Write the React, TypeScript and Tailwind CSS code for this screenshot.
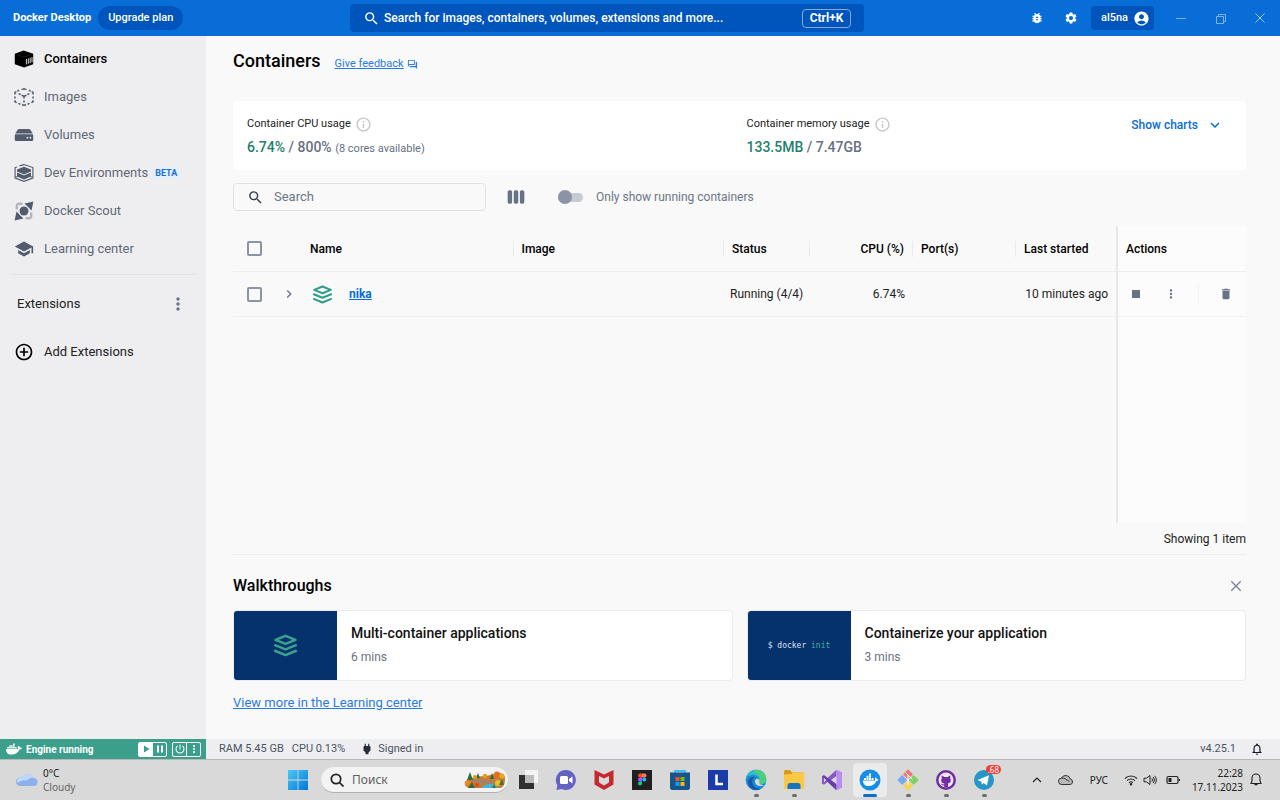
import React from "react";
import {
  MdAccountCircle,
  MdAddCircleOutline,
  MdBugReport,
  MdChevronRight,
  MdClose,
  MdDelete,
  MdInfoOutline,
  MdKeyboardArrowDown,
  MdMoreVert,
  MdNotificationsNone,
  MdOutlineForum,
  MdPause,
  MdPlayArrow,
  MdPower,
  MdPowerSettingsNew,
  MdSchool,
  MdSearch,
  MdSettings,
  MdStop,
  MdViewWeek,
} from "react-icons/md";
import { FaDocker } from "react-icons/fa";

type IconProps = { className?: string };

function ContainersIcon({ className }: IconProps) {
  return (
    <svg viewBox="0 0 20 18" className={className} fill="currentColor" aria-hidden="true">
      <path d="M9.6.6 19.2 3.8v10.400L10 17.600.8 14.200V3.800z" />
      <path d="m1 3.900 8.800 3.200 9-3.200" stroke="#5a5a5e" strokeWidth="0.300" fill="none" />
      <path d="M12.400 9v5.400M14.300 8.400v5.400M16.200 7.700v5.400M18 7.100v5.300" stroke="#eeeef1" strokeWidth="0.900" fill="none" />
    </svg>
  );
}

function ImagesIcon({ className }: IconProps) {
  return (
    <svg viewBox="0 0 20 18" className={className} fill="none" stroke="currentColor" strokeWidth="1.5" aria-hidden="true">
      <path d="M7.6 1.6 10 .9l2.4.7M3.2 3.1l2-.8M14.8 2.3l2 .8M1 6.6V4.4l1.4-.7M19 6.6V4.4l-1.4-.7M1 8.4v2M19 8.4v2M1 12.2v1.6l1.6.9M19 12.2v1.6l-1.6.9M4.4 15.4l2 .8M15.6 15.4l-2 .8M8 16.7l2 .6 2-.6" />
      <path d="m4.6 5.6 2 .9M15.4 5.6l-2 .9M7.6 7.3l2.4 1 2.4-1M10 8.4v2.2M10 12.4v2" />
    </svg>
  );
}

function VolumesIcon({ className }: IconProps) {
  return (
    <svg viewBox="0 0 20 18" className={className} fill="currentColor" aria-hidden="true">
      <path d="M5 3h10a1.500 1.500 0 0 1 1.200.6L18.800 7.400H1.200l2.600-3.800A1.500 1.500 0 0 1 5 3z" />
      <path d="M2 8.200h16a1.200 1.200 0 0 1 1.200 1.200v4.400A1.200 1.200 0 0 1 18 15H2a1.200 1.200 0 0 1-1.200-1.200V9.400A1.200 1.200 0 0 1 2 8.200z" />
      <circle cx="13.4" cy="11.700" r="0.900" fill="#eeeef1" />
      <circle cx="16.400" cy="11.700" r="0.900" fill="#eeeef1" />
    </svg>
  );
}

function DevIcon({ className }: IconProps) {
  return (
    <svg viewBox="0 0 20 18" className={className} fill="none" stroke="currentColor" aria-hidden="true">
      <path d="M5.500 1.900 10 .6l8.900 3v10.400L10 17.300 1.100 14V3.600L3 2.900" strokeWidth="1.100" />
      <path d="M3 5.600 10 2.800l7 2.800v7L10 15.600 3 12.600z" fill="currentColor" stroke="none" />
      <path d="m3 8 7 2.900L17 8" stroke="#eeeef1" strokeWidth="1" />
      <path d="m1.100 12.200 2.400 1M18.900 12.200l-2.400 1" strokeWidth="1" />
    </svg>
  );
}

function ScoutIcon({ className }: IconProps) {
  return (
    <svg viewBox="0 0 20 20" className={className} fill="none" aria-hidden="true">
      <path d="M10.500 2.500 19.400.6l-1.900 8.900zM9.500 17.500.6 19.400l1.900-8.900z" fill="#505b6b" />
      <path d="M2.800 8.500V5a2.200 2.200 0 0 1 2.200-2.200h3.500M17.200 11.500V15a2.200 2.200 0 0 1-2.200 2.200h-3.500" stroke="#b0b5be" strokeWidth="2.400" />
      <circle cx="10" cy="10" r="5.600" fill="#eeeef1" />
      <circle cx="10" cy="10" r="4.500" fill="#505b6b" />
    </svg>
  );
}

function StackIcon({ className }: IconProps) {
  return (
    <svg viewBox="0 0 24 22" className={className} fill="none" stroke="currentColor" strokeWidth="2.400" strokeLinejoin="round" aria-hidden="true">
      <path d="M12 1.700 21.600 5.600 12 9.500 2.400 5.600z" />
      <path d="m1.200 10.400 10.800 4.400 10.800-4.400M1.200 15.800 12 20.200l10.800-4.400" />
    </svg>
  );
}

const navItems = [
  { label: "Containers", Icon: ContainersIcon, active: true },
  { label: "Images", Icon: ImagesIcon },
  { label: "Volumes", Icon: VolumesIcon },
  { label: "Dev Environments", Icon: DevIcon, badge: "BETA" },
  { label: "Docker Scout", Icon: ScoutIcon },
  { label: "Learning center", Icon: MdSchool },
];

function TitleBar() {
  return (
    <header className="flex h-9 items-center bg-[#086dd7] text-white">
      <div className="flex flex-350 items-center">
        <span className="ml-[13px] text-[11px] font-bold">Docker Desktop</span>
        <button className="ml-[7px] h-6 rounded-full bg-[#0055bc] px-[10px] text-[11px] font-medium">Upgrade plan</button>
      </div>
      <button className="flex h-7 w-[514px] items-center rounded bg-[#0055bc] px-[13px] text-xs font-medium">
        <MdSearch className="mr-1 size-[17px]" />
        <span className="flex-1 text-left">Search for images, containers, volumes, extensions and more...</span>
        <kbd className="flex h-[19px] w-[49px] items-center justify-center rounded border border-[#7faade] font-['Roboto',sans-serif] text-xs font-bold">
          Ctrl+K
        </kbd>
      </button>
      <div className="flex flex-416 items-center justify-end">
        <button aria-label="Troubleshoot" className="mr-5"><MdBugReport className="size-[14px]" /></button>
        <button aria-label="Settings" className="mr-[13px]"><MdSettings className="size-[14px]" /></button>
        <button className="flex h-6 items-center gap-1 rounded bg-[#0055bc] pr-1 pl-[10px] text-[11px] font-medium">
          al5na
          <MdAccountCircle className="ml-px size-[17px]" />
        </button>
        <button aria-label="Minimize" className="flex h-9 w-10 items-center justify-center pl-[14px]">
          <svg viewBox="0 0 10 10" className="size-[10px]" stroke="#7fb0ea"><path d="M0 5.500h10" /></svg>
        </button>
        <button aria-label="Restore" className="flex h-9 w-10 items-center justify-center">
          <svg viewBox="0 0 12 12" className="mt-px ml-[14px] size-3" fill="none" stroke="#7fb0ea"><path d="M1.500 3.500h7v7h-7zM3.500 3.500v-2h7v7h-2" /></svg>
        </button>
        <button aria-label="Close" className="flex h-9 w-[46px] items-center justify-center pl-[6px]">
          <svg viewBox="0 0 10 10" className="size-[10px]" stroke="#a5c8f2"><path d="M.5.5l9 9M9.500.5l-9 9" /></svg>
        </button>
      </div>
    </header>
  );
}

function Sidebar() {
  return (
    <aside className="flex w-[206px] shrink-0 flex-col bg-[#eeeef1] pt-1">
      <nav>
        {navItems.map(({ label, Icon, active, badge }) => (
          <a
            key={label}
            href="#"
            className={
              active
                ? "flex h-[38px] items-center pl-[14px] text-[13px] font-medium text-black"
                : "flex h-[38px] items-center pl-[14px] text-[13px] text-[#5f6875]"
            }
          >
            <Icon className={active ? "mr-[10px] size-5 text-black" : "mr-[10px] size-5 text-[#505b6b]"} />
            {label}
            {badge && (
              <span className="ml-1 rounded-sm bg-[#e3f0fb] px-[3px] text-[9px] leading-3 font-bold text-[#1a6fd4]">
                {badge}
              </span>
            )}
          </a>
        ))}
      </nav>
      <hr className="mx-[10px] mt-[6px] border-[#e4e4e8]" />
      <div className="mt-[19px] flex items-center justify-between pr-[18px] pl-[17px] text-[13px] text-[#222]">
        Extensions
        <button aria-label="Extension options" className="text-[#677285]"><MdMoreVert className="size-5" /></button>
      </div>
      <a href="#" className="mt-7 flex items-center pl-[14px] text-[13px] text-[#222]">
        <MdAddCircleOutline className="mr-[10px] size-5 text-black" />
        Add Extensions
      </a>
    </aside>
  );
}

function Stats() {
  return (
    <section className="flex h-[69px] rounded bg-white pl-[14px]">
      <div className="w-1/2 pt-[14px]">
        <h2 className="flex items-center text-[11px] leading-[18px] text-[#222]">
          Container CPU usage <MdInfoOutline className="ml-1 size-[17px] text-[#c4c7cc]" />
        </h2>
        <p className="mt-1 text-sm leading-5 font-medium text-[#66707f]">
          <span className="text-[#1f7f6d]">6.74%</span> / 800% <span className="text-[11px] font-normal">(8 cores available)</span>
        </p>
      </div>
      <div className="flex-1 pt-[14px]">
        <h2 className="flex items-center text-[11px] leading-[18px] text-[#222]">
          Container memory usage <MdInfoOutline className="ml-1 size-[17px] text-[#c4c7cc]" />
        </h2>
        <p className="mt-1 text-sm leading-5 font-medium text-[#66707f]">
          <span className="text-[#1f7f6d]">133.5MB</span> / 7.47GB
        </p>
      </div>
      <button className="mt-[14px] mr-[22px] flex h-5 items-center text-xs font-medium text-[#086dd7]">
        Show charts <MdKeyboardArrowDown className="ml-2 size-[18px]" />
      </button>
    </section>
  );
}

const box = "block size-[15px] appearance-none rounded-xs border-2 border-[#8b93a5] bg-transparent";
const headCell = "h-[46px] border-b border-[#eeeeef] p-0 text-left font-medium";

function HeadCell({ label, right }: { label: string; right?: boolean }) {
  return (
    <th className={headCell}>
      <span
        className={
          right
            ? "block border-l border-[#ebebed] pr-2 text-right leading-4"
            : "block border-l border-[#ebebed] pl-2 leading-4"
        }
      >
        {label}
      </span>
    </th>
  );
}

function ContainerTable() {
  return (
    <div className="mt-[15px] flex flex-1 flex-col">
      <table className="w-full table-fixed border-separate border-spacing-0 text-[#222]">
        <colgroup>
          <col className="w-[43px]" />
          <col className="w-[26px]" />
          <col />
          <col />
          <col className="w-[86px]" />
          <col className="w-[103px]" />
          <col className="w-[103px]" />
          <col className="w-[101px]" />
          <col className="w-[130px]" />
        </colgroup>
        <thead className="text-xs text-black">
          <tr>
            <th className={headCell}>
              <input type="checkbox" aria-label="Select all" className={`${box} ml-[14px]`} />
            </th>
            <th className={headCell} aria-label="Expand" />
            <th className={headCell}><span className="pl-2">Name</span></th>
            <HeadCell label="Image" />
            <HeadCell label="Status" />
            <HeadCell label="CPU (%)" right />
            <HeadCell label="Port(s)" />
            <HeadCell label="Last started" />
            <th className="h-[46px] border-b border-l-2 border-b-[#eeeeef] border-l-[#e8e8ea] bg-[#fcfcfc] p-0 pl-2 text-left font-medium">
              Actions
            </th>
          </tr>
        </thead>
        <tbody className="text-xs">
          <tr>
            <td className="h-[45px] border-b border-[#f0f0f1] p-0">
              <input type="checkbox" aria-label="Select nika" className={`${box} ml-[14px]`} />
            </td>
            <td className="border-b border-[#f0f0f1] p-0">
              <button aria-label="Expand nika" className="ml-[5px] block text-[#677285]"><MdChevronRight className="size-4" /></button>
            </td>
            <td className="border-b border-[#f0f0f1] p-0">
              <div className="flex items-center pl-[10px]">
                <StackIcon className="h-[19px] w-[21px] text-[#2e9e88]" />
                <a href="#" className="ml-4 font-bold text-[#086dd7] underline">nika</a>
              </div>
            </td>
            <td className="border-b border-[#f0f0f1]" />
            <td className="border-b border-[#f0f0f1] p-0 pl-[7px] whitespace-nowrap">Running (4/4)</td>
            <td className="border-b border-[#f0f0f1] p-0 pr-[7px] text-right">6.74%</td>
            <td className="border-b border-[#f0f0f1]" />
            <td className="border-b border-[#f0f0f1] p-0 pr-2 text-right whitespace-nowrap">10 minutes ago</td>
            <td className="border-b border-l-2 border-b-[#f0f0f1] border-l-[#e8e8ea] bg-[#fcfcfc] p-0">
              <div className="flex items-center justify-between pr-[13px] pl-[10px] text-[#677285]">
                <button aria-label="Stop"><MdStop className="size-4" /></button>
                <button aria-label="More actions"><MdMoreVert className="size-[14px]" /></button>
                <span className="h-5 border-l border-[#f3f3f5]" />
                <button aria-label="Delete"><MdDelete className="size-[14px]" /></button>
              </div>
            </td>
          </tr>
        </tbody>
      </table>
      <div className="flex flex-1 justify-end">
        <div className="w-[130px] border-l-2 border-[#e8e8ea] bg-[#fcfcfc]" />
      </div>
    </div>
  );
}

function WalkCard({ title, time, children }: { title: string; time: string; children: React.ReactNode }) {
  return (
    <a href="#" className="flex h-[71px] flex-1 overflow-hidden rounded border border-[#ebebed] bg-white">
      <div className="flex w-[103px] items-center justify-center bg-[#05316d]">{children}</div>
      <div className="pt-[13px] pl-[14px]">
        <h3 className="text-sm leading-[18px] font-medium text-[#111]">{title}</h3>
        <p className="mt-[6px] text-xs leading-[18px] text-[#6b7280]">{time}</p>
      </div>
    </a>
  );
}

function Walkthroughs() {
  return (
    <section className="border-t border-[#eeeeef] pt-5">
      <div className="flex h-[22px] items-center justify-between">
        <h2 className="text-base font-medium text-black">Walkthroughs</h2>
        <button aria-label="Dismiss" className="mr-px text-[#8088a0]"><MdClose className="size-[18px]" /></button>
      </div>
      <div className="mt-[13px] flex gap-[14px]">
        <WalkCard title="Multi-container applications" time="6 mins">
          <StackIcon className="h-[23px] w-[25px] text-[#3aa38e]" />
        </WalkCard>
        <WalkCard title="Containerize your application" time="3 mins">
          <code className="font-['DejaVu_Sans_Mono',monospace] text-[8px] text-[#dbe4f0]">
            $ docker <span className="text-[#3fb39b]">init</span>
          </code>
        </WalkCard>
      </div>
      <a href="#" className="mt-[13px] mb-[27px] inline-block text-[13px] leading-[18px] text-[#2b7bdc] underline">
        View more in the Learning center
      </a>
    </section>
  );
}

function StatusBar() {
  return (
    <footer className="flex h-5 text-[11px] text-[#4a5464]">
      <div className="flex w-[206px] items-center bg-[#3b9f8b] pr-[5px] pl-[6px] text-white">
        <FaDocker className="size-4" />
        <span className="ml-1 flex-1 text-[10px] font-bold">Engine running</span>
        <div className="flex h-[15px] rounded-xs border border-white">
          <button aria-label="Start" className="flex w-[14px] items-center justify-center bg-white text-[#3b9f8b]"><MdPlayArrow className="size-3" /></button>
          <button aria-label="Pause" className="flex w-[13px] items-center justify-center"><MdPause className="size-3" /></button>
        </div>
        <div className="ml-[5px] flex h-[15px] rounded-xs border border-white">
          <button aria-label="Quit" className="flex w-[14px] items-center justify-center border-r border-white"><MdPowerSettingsNew className="size-3" /></button>
          <button aria-label="Engine options" className="flex w-[13px] items-center justify-center"><MdMoreVert className="size-3" /></button>
        </div>
      </div>
      <div className="flex flex-1 items-center bg-[#eeeef1] pr-4 pl-[13px]">
        <span>RAM 5.45 GB</span>
        <span className="ml-2">CPU 0.13%</span>
        <MdPower className="mr-1 ml-[15px] size-[14px] text-[#222c3a]" />
        <span className="flex-1">Signed in</span>
        <span>v4.25.1</span>
        <button aria-label="Notifications" className="ml-[14px] text-[#111827]"><MdNotificationsNone className="size-[14px]" /></button>
      </div>
    </footer>
  );
}

function WindowsLogo() {
  return (
    <svg viewBox="0 0 20 20" className="size-5" aria-hidden="true">
      <defs>
        <linearGradient id="win" x1="0" y1="0" x2="1" y2="1" gradientUnits="objectBoundingBox">
          <stop offset="0" stopColor="#4cc8f6" />
          <stop offset="1" stopColor="#0078d6" />
        </linearGradient>
      </defs>
      <path fill="url(#win)" d="M0 0h9.600v9.600H0zM10.400 0H20v9.600h-9.600zM0 10.400h9.600V20H0zM10.400 10.400H20V20h-9.600z" />
    </svg>
  );
}

function AutumnScene() {
  return (
    <svg viewBox="0 0 42 20" className="h-5 w-[42px]" aria-hidden="true">
      <path d="M1 12c2-3 5-3 8-4s7-2 12-2 9-3 13-3 7 1 7 6-1 7-4 9H5c-3-1-5-3-4-6z" fill="#c87b34" />
      <path d="M7 10c7-3 14 0 20 1s8-2 12-1-1 4-6 4-15 1-26-4z" fill="#a0826d" />
      <path d="M18 18c0-3 4-4 9-4l6 1c-1 2-1 2 1 3z" fill="#45b5d8" />
      <path d="m6 2 3 8H3zM14 3l2 5h-4zM28 3l2 6h-4zM8 12l3 6H4z" fill="#2f6b39" />
      <circle cx="11" cy="7" r="2" fill="#e8941a" />
      <circle cx="21" cy="6" r="2.200" fill="#e3a01b" />
      <circle cx="33" cy="4.500" r="3" fill="#e4701c" />
      <circle cx="38" cy="6" r="2.600" fill="#f0a51d" />
      <circle cx="3.500" cy="13" r="2.400" fill="#f08a1b" />
      <circle cx="13" cy="15" r="2" fill="#d64b22" />
      <circle cx="34" cy="13" r="3" fill="#efbe20" />
      <path d="m38 9 2 6h-5zM30 14l2 4h-4z" fill="#42733a" />
    </svg>
  );
}

const apps: { name: string; state?: "open" | "active"; icon: React.ReactNode }[] = [
  {
    name: "Task view",
    icon: <><path d="M8 1h13v13H8z" fill="#f4f4f4" /><path d="M2 6h15v14H2z" fill="#303030" /><path d="M8 6h9v8H8z" fill="#bcbcbc" /></>,
  },
  {
    name: "Chat",
    icon: <><path d="M11 1a10 10 0 1 1-4.500 19L1.500 21l.8-4.800A10 10 0 0 1 11 1z" fill="#6463c4" /><rect x="5" y="7" width="8" height="8" rx="1.500" fill="#fff" /><path d="m14 10 3.500-2.500v7L14 12z" fill="#fff" /></>,
  },
  {
    name: "McAfee",
    icon: <path d="M1.500 1 11 5.500 20.500 1v14.500L11 21l-9.500-5.500zM6 7v6.500l5 3 5-3V7l-5 2.500z" fill="#c22a30" fillRule="evenodd" />,
  },
  {
    name: "Figma",
    icon: <><rect x="1" y="1" width="20" height="20" fill="#202020" /><path d="M9 4.500h2v4H9a2 2 0 0 1 0-4z" fill="#f24e1e" /><path d="M11 4.500h2.500a2 2 0 0 1 0 4H11z" fill="#ff7262" /><path d="M9 8.500h2v4H9a2 2 0 0 1 0-4z" fill="#a259ff" /><circle cx="13.300" cy="10.500" r="2" fill="#1abcfe" /><path d="M9 12.500h2v2a2 2 0 1 1-2-2z" fill="#0acf83" /></>,
  },
  {
    name: "Microsoft Store",
    icon: <><path d="M6 4V2h10v2" fill="none" stroke="#3cb9f2" strokeWidth="1.800" /><path d="M1 3.500h20v15a2.500 2.500 0 0 1-2.500 2.500h-15A2.500 2.500 0 0 1 1 18.500z" fill="#17558f" /><path d="M6.500 8h4v4h-4z" fill="#f25022" /><path d="M11.500 8h4v4h-4z" fill="#7fba00" /><path d="M6.500 13h4v4h-4z" fill="#00a4ef" /><path d="M11.500 13h4v4h-4z" fill="#ffb900" /></>,
  },
  {
    name: "Lightshot",
    icon: <><rect x="1" y="1" width="20" height="20" fill="#1a3ba8" /><path d="M9.500 5.500v9.500H16" fill="none" stroke="#fff" strokeWidth="2.500" /></>,
  },
  {
    name: "Edge",
    state: "open",
    icon: <><circle cx="11" cy="11" r="10.300" fill="#1a8ad6" /><path d="M1.200 8C3 3 7 .7 11 .7c6 0 10.300 4 10.300 9.300 0 3-2 5-5 5-2 0-3-1-2-2.500C15.300 10 12.500 6 8.500 6 5 6 2.500 7 1.200 8z" fill="#2fb9d0" /><path d="M12 .8c5.500.4 9.300 4.700 9.300 9.200 0 3-2 5-5 5-2 0-3-1-2-2.500C16 9 14 4 8 3.500 9 2 10 1 12 .8z" fill="#4fce7c" /><path d="M8.500 9c-3.500 4.500.5 11 7.500 10.500-5 3.200-12 1-12.800-5.500C2.700 10 5.500 7.500 10 8z" fill="#1458a8" /><path d="M20 15.800c-4.500 2.700-10 .7-10-3.300 0-1.500 1-2.500 2.200-2.700 2 .2 2.800 1.500 2.100 2.700-1 2 2 4.300 5.700 3.300z" fill="#d9d9d9" /></>,
  },
  {
    name: "File Explorer",
    state: "open",
    icon: <><path d="M1 2.500A1.500 1.500 0 0 1 2.500 1H7l2 2.500h11.500V9H1z" fill="#dd9a12" /><path d="M1 5.500 9 5l1-1.500h10.500a.8.800 0 0 1 .8.800V20H1z" fill="#fbc945" /><path d="M4.500 20v-3.500A2.500 2.500 0 0 1 7 14h8a2.500 2.500 0 0 1 2.500 2.500V20z" fill="#1675bb" /></>,
  },
  {
    name: "Visual Studio",
    icon: <><path d="M15.500.8 6.500 9 3 6.300 1 7.200v7.600l2 .9L6.500 13l9 8.200zM3 8.900 5.100 11 3 13.100zM15.500 7v8L10 11z" fill="#8a55c4" fillRule="evenodd" /><path d="m1 7.200 2-.9 12.500 9.200v5.700z" fill="#6a3fa6" /><path d="m15.500.8 5.500 2.500v15.400l-5.500 2.500z" fill="#b98cf0" /><path d="M3 8.900 5.100 11 3 13.100z" fill="#d9d9d9" /></>,
  },
  {
    name: "Docker Desktop",
    state: "active",
    icon: <><circle cx="11" cy="11" r="10.500" fill="#168ee5" /><path d="M4 11.500h12c.3-1 .3-1.500 0-2.500l1-.7 1 2 1.500.2c-.3 1-1 1.500-2.200 1.500C16 15.500 13 17 9.500 17 6 17 4 15 4 11.500zM5 9h2v2H5zM7.500 9h2v2h-2zM10 9h2v2h-2zM12.500 9h2v2h-2zM7.500 6.800h2v2h-2zM10 6.800h2v2h-2zM10 4.500h2v2h-2z" fill="#fff" /></>,
  },
  {
    name: "Git GUI",
    state: "open",
    icon: <><path d="m11 .3 5 5-5 5-5-5z" fill="#ef7474" /><path d="m16.800 6 5 5-5 5-5-5z" fill="#83cf63" /><path d="m11 11.700 5 5-5 5-5-5z" fill="#f4d45d" /><path d="m5.200 6 5 5-5 5-5-5z" fill="#79a9f1" /><path d="m8.500 3.500 7 7M11 6v10" stroke="#fff" strokeWidth="1" /></>,
  },
  {
    name: "GitHub Desktop",
    state: "open",
    icon: <><circle cx="11" cy="11" r="10" fill="#702fa0" /><circle cx="11" cy="11" r="7.500" fill="#eee5f5" /><path d="M7 6.500 9.300 8h3.400L15 6.500c.5 1 .5 1.800.2 2.700 1.300 2.600.3 5-2.600 5.300.7.800.6 1.500.6 4h-4v-2c-2 .3-2.500-.7-3.200-1.700 1.200-.2 1.500 1 3.200.6l.2-.900c-2.900-.3-3.900-2.700-2.600-5.300C6.500 8.300 6.500 7.500 7 6.500z" fill="#702fa0" /></>,
  },
  {
    name: "Telegram",
    state: "open",
    icon: <><circle cx="11" cy="11" r="10" fill="#2496c8" /><path d="m4.500 11 11.500-4.700-2 10.200-3.400-2.500-1.700 1.800-.5-3z" fill="#fff" /></>,
  },
];

function Taskbar() {
  return (
    <footer className="flex h-[41px] items-center border-t border-[#b5b7b8] bg-[#d9d9d9] font-['Noto_Sans',sans-serif] text-[10px] leading-[14px] text-[#222]">
      <button className="flex w-[288px] items-center pl-4 text-left">
        <svg viewBox="0 0 22 16" className="mr-[5px] h-4 w-[22px]" aria-hidden="true">
          <path d="M5 14a4.500 4.500 0 1 1 1-8.700A6.500 6.500 0 0 1 17.500 6a4 4 0 0 1 0 8z" fill="#8cb0ee" />
          <path d="M1 10a4 4 0 0 1 5-4.700A6.500 6.500 0 0 1 17.500 6C13 5 12 9.500 9 8.500 6 7.500 4 11 1 10z" fill="#bcd8fa" />
        </svg>
        <span>0°C<span className="block text-[#666]">Cloudy</span></span>
      </button>
      <button aria-label="Start"><WindowsLogo /></button>
      <label className="ml-[13px] flex h-[26px] w-[187px] items-center rounded-full border-b border-[#b0b0b0] bg-[#f3f3f3] pr-[2px] pl-[9px]">
        <svg viewBox="0 0 14 14" className="mr-2 size-[14px]" fill="none" stroke="#222" strokeWidth="1.700" aria-hidden="true"><circle cx="6" cy="6" r="4.700" /><path d="m9.500 9.500 4 4" /></svg>
        <input aria-label="Поиск" placeholder="Поиск" className="w-0 flex-1 bg-transparent text-xs outline-none placeholder:text-[#606060]" />
        <AutumnScene />
      </label>
      <div className="ml-px flex">
        {apps.map(({ name, state, icon }) => (
          <button
            key={name}
            aria-label={name}
            className={
              state === "active"
                ? "relative mx-[2px] flex h-[34px] w-[34px] items-center justify-center rounded bg-[#ebebeb]"
                : "relative mx-[2px] flex h-[34px] w-[34px] items-center justify-center rounded"
            }
          >
            <svg viewBox="0 0 22 22" className="size-[22px]" aria-hidden="true">{icon}</svg>
            {state === "open" && <span className="absolute bottom-0 h-[3px] w-[5px] rounded-full bg-[#6d6d6d]" />}
            {state === "active" && <span className="absolute bottom-0 h-[3px] w-[14px] rounded-full bg-[#0b6fce]" />}
            {name === "Telegram" && (
              <span className="absolute top-[2px] right-0 rounded-full bg-[#ee3f3a] px-[2px] text-[8px] leading-[9px] text-white">.68</span>
            )}
          </button>
        ))}
      </div>
      <div className="ml-auto flex items-center pr-[18px]">
        <button aria-label="Show hidden icons">
          <svg viewBox="0 0 10 8" className="h-2 w-[10px]" fill="none" stroke="#222" strokeWidth="1.200"><path d="m1 6 4-4 4 4" /></svg>
        </button>
        <button aria-label="OneDrive" className="ml-4">
          <svg viewBox="0 0 16 12" className="h-3 w-4" fill="#b8b8b8" stroke="#333" strokeWidth="1"><path d="M4 10.500a3.200 3.200 0 0 1-.6-6.400A4.800 4.800 0 0 1 12.300 5a2.800 2.800 0 0 1 0 5.500z" /><path d="M3.400 4.100c3-.6 4.500 1.500 8 3.400" fill="none" /></svg>
        </button>
        <span className="ml-4">РУС</span>
        <button aria-label="Network, volume and battery" className="ml-4 flex items-center gap-[5px]">
          <svg viewBox="0 0 14 12" className="h-3 w-[14px]" fill="none" stroke="#222" strokeWidth="1.100"><path d="M1 4.500a8.500 8.500 0 0 1 12 0M3 6.700a5.700 5.700 0 0 1 8 0M5 8.700a2.900 2.900 0 0 1 4 0" /><circle cx="7" cy="10.300" r="0.700" fill="#222" /></svg>
          <svg viewBox="0 0 14 12" className="h-3 w-[14px]" fill="none" stroke="#222" strokeWidth="1"><path d="M1 4.200h2.500L7 1.500v9L3.500 7.800H1zM8.800 4.300a2.500 2.500 0 0 1 0 3.400M10.200 3a4.500 4.500 0 0 1 0 6M11.600 1.800a6 6 0 0 1 0 8.400" /></svg>
          <svg viewBox="0 0 14 10" className="ml-1 h-[10px] w-[14px]" fill="none" stroke="#222" strokeWidth="1.200"><rect x="1" y="1.500" width="11" height="7" rx="1.500" /><path d="M2.500 3h3v4h-3z" fill="#222" stroke="none" /><path d="M13.500 4v2" /></svg>
        </button>
        <button className="ml-3 text-right">22:28<span className="block">17.11.2023</span></button>
        <button aria-label="Notification center" className="ml-[7px]">
          <svg viewBox="0 0 12 14" className="h-[14px] w-3" fill="none" stroke="#222" strokeWidth="1.100"><path d="M6 1a4 4 0 0 0-4 4v3L1 10.500h10L10 8V5a4 4 0 0 0-4-4zM4.500 10.800a1.600 1.600 0 0 0 3 0" /></svg>
        </button>
      </div>
    </footer>
  );
}

export default function App() {
  return (
    <div className="flex min-h-screen flex-col bg-[#f9f9f9] font-['Roboto',sans-serif]">
      <TitleBar />
      <div className="flex flex-1">
        <Sidebar />
        <main className="flex flex-1 flex-col pr-[34px] pl-[27px]">
          <div className="mt-[13px] mb-7 flex items-center">
            <h1 className="text-lg leading-6 font-medium text-black">Containers</h1>
            <a href="#" className="mt-[6px] ml-[14px] flex items-center text-[11px] text-[#2b7bdc]">
              <span className="underline">Give feedback</span>
              <MdOutlineForum className="ml-[3px] size-[11px]" />
            </a>
          </div>
          <Stats />
          <div className="mt-[13px] flex h-7 items-center">
            <label className="flex h-7 w-[253px] items-center rounded border border-[#dfe1e6] pl-[13px] text-[#333b47]">
              <MdSearch className="mr-[10px] size-[17px]" />
              <input
                aria-label="Search"
                placeholder="Search"
                className="w-0 flex-1 bg-transparent text-[13px] outline-none placeholder:text-[#6b7686]"
              />
            </label>
            <button aria-label="Columns" className="ml-5 text-[#677285]"><MdViewWeek className="size-5" /></button>
            <label className="ml-8 flex items-center text-xs text-[#6b7686]">
              <span className="relative flex w-[25px] items-center">
                <input type="checkbox" role="switch" className="peer h-[9px] w-[25px] appearance-none rounded-full bg-[#c5cad3]" />
                <span className="pointer-events-none absolute left-0 size-[14px] rounded-full bg-[#8b93a7] peer-checked:left-[11px]" />
              </span>
              <span className="ml-[13px]">Only show running containers</span>
            </label>
          </div>
          <ContainerTable />
          <p className="pt-2 pb-[6px] text-right text-xs leading-[17px] text-[#222]">Showing 1 item</p>
          <Walkthroughs />
        </main>
      </div>
      <StatusBar />
      <Taskbar />
    </div>
  );
}
